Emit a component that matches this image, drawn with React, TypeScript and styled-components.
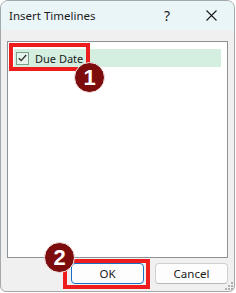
import React from 'react';
import styled, { createGlobalStyle } from 'styled-components';

const GlobalStyle = createGlobalStyle`
  html, body {
    margin: 0;
    padding: 0;
    background: #ffffff;
  }
  body {
    font-family: "Noto Sans", "Open Sans", Arial, sans-serif;
  }
`;

const Window = styled.div`
  position: relative;
  box-sizing: border-box;
  width: 235px;
  height: 292px;
  border: 1px solid #a3a8ab;
  border-radius: 8px 8px 6px 6px;
  background: #f0f0f0;
  overflow: hidden;
  display: flex;
  flex-direction: column;
`;

const TitleBar = styled.div`
  height: 29px;
  flex: none;
  display: flex;
  align-items: center;
  background: #eaf5f8;
  padding-left: 8px;
`;

const Title = styled.div`
  flex: 1;
  font-size: 11.5px;
  color: #1a1a1a;
  padding-bottom: 1px;
`;

const TitleButton = styled.div<{ $w: number }>`
  width: ${(p) => p.$w}px;
  height: 29px;
  display: flex;
  align-items: center;
  justify-content: center;
  font-size: 14px;
  color: #1a1a1a;
`;

const Body = styled.div`
  flex: 1;
  display: flex;
  flex-direction: column;
  padding: 11px 6px 0 6px;
`;

const ListBox = styled.div`
  box-sizing: border-box;
  height: 217px;
  background: #ffffff;
  border: 1px solid #8e9296;
  padding: 7px 6px 0 6px;
`;

const Row = styled.div`
  height: 18px;
  display: flex;
  align-items: center;
  background: #d4efe0;
  padding-left: 2px;
  gap: 6px;
`;

const CheckBox = styled.div`
  box-sizing: border-box;
  width: 13px;
  height: 13px;
  border: 1px solid #7d9e8b;
  background: #e6f5ec;
  display: flex;
  align-items: center;
  justify-content: center;
`;

const RowLabel = styled.span`
  font-size: 11px;
  color: #1a1a1a;
`;

const ButtonRow = styled.div`
  display: flex;
  justify-content: flex-end;
  gap: 11px;
  margin-top: 5px;
`;

const Button = styled.div<{ $primary?: boolean }>`
  box-sizing: border-box;
  width: 73px;
  height: 21px;
  border-radius: 4px;
  background: #fdfdfd;
  border: 1px solid ${(p) => (p.$primary ? '#1a6fc4' : '#d0d0d0')};
  border-bottom-color: ${(p) => (p.$primary ? '#1a6fc4' : '#b8b8b8')};
  display: flex;
  align-items: center;
  justify-content: center;
  font-size: 11.5px;
  color: #1a1a1a;
`;

const Highlight = styled.div<{ $x: number; $y: number; $w: number; $h: number }>`
  position: absolute;
  box-sizing: border-box;
  left: ${(p) => p.$x}px;
  top: ${(p) => p.$y}px;
  width: ${(p) => p.$w}px;
  height: ${(p) => p.$h}px;
  border: 4px solid #ee1c1c;
`;

const Badge = styled.div<{ $x: number; $y: number }>`
  position: absolute;
  box-sizing: border-box;
  left: ${(p) => p.$x}px;
  top: ${(p) => p.$y}px;
  width: 31px;
  height: 31px;
  border-radius: 50%;
  background: #7d0d0d;
  border: 1px solid #f4e6e6;
  color: #ffffff;
  font-family: "Liberation Sans", Arial, sans-serif;
  font-weight: bold;
  font-size: 22px;
  display: flex;
  align-items: center;
  justify-content: center;
`;

const Grip = styled.svg`
  position: absolute;
  right: 1px;
  bottom: 1px;
`;

export default function App() {
  return (
    <>
      <GlobalStyle />
      <Window>
        <TitleBar>
          <Title>Insert Timelines</Title>
          <TitleButton $w={42}>?</TitleButton>
          <TitleButton $w={46}>
            <svg width="11" height="11" viewBox="0 0 11 11">
              <path d="M0.5 0.5 L10.5 10.5 M10.5 0.5 L0.5 10.5" stroke="#1a1a1a" strokeWidth="1.1" />
            </svg>
          </TitleButton>
        </TitleBar>
        <Body>
          <ListBox>
            <Row>
              <CheckBox>
                <svg width="9" height="8" viewBox="0 0 9 8">
                  <path d="M0.8 4.2 L3.2 6.6 L8.2 1" fill="none" stroke="#333" strokeWidth="1.4" />
                </svg>
              </CheckBox>
              <RowLabel>Due Date</RowLabel>
            </Row>
          </ListBox>
          <ButtonRow>
            <Button $primary>OK</Button>
            <Button>Cancel</Button>
          </ButtonRow>
        </Body>
        <Grip width="8" height="8" viewBox="0 0 8 8">
          <rect x="6" y="0" width="2" height="2" fill="#b0b0b0" />
          <rect x="3" y="3" width="2" height="2" fill="#b0b0b0" />
          <rect x="6" y="3" width="2" height="2" fill="#b0b0b0" />
          <rect x="0" y="6" width="2" height="2" fill="#b0b0b0" />
          <rect x="3" y="6" width="2" height="2" fill="#b0b0b0" />
          <rect x="6" y="6" width="2" height="2" fill="#b0b0b0" />
        </Grip>
        <Highlight $x={8} $y={42} $w={81} $h={28} />
        <Badge $x={73} $y={61}>1</Badge>
        <Highlight $x={62} $y={258} $w={87} $h={30} />
        <Badge $x={43} $y={241}>2</Badge>
      </Window>
    </>
  );
}
